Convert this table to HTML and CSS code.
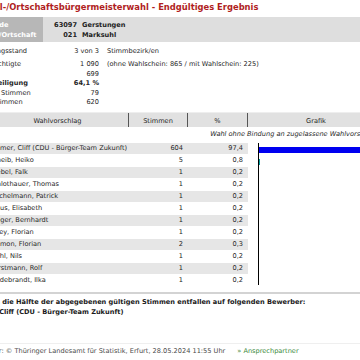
FILE: index.html
```html
<!DOCTYPE html>
<html lang="de">
<head>
<meta charset="utf-8">
<title>Ortsteil-/Ortschaftsbürgermeisterwahl - Endgültiges Ergebnis</title>
<link rel="stylesheet" href="styles.css">
</head>
<body>
<div class="page">
  <h1 class="title">Ortsteil-/Ortschaftsbürgermeisterwahl - Endgültiges Ergebnis</h1>

  <div class="band">
    <div class="band-labels">
      <div>Gemeinde</div>
      <div>Ortsteil/Ortschaft</div>
    </div>
    <div class="band-values">
      <span class="code">63097</span><span>Gerstungen</span>
      <span class="code">021</span><span>Marksuhl</span>
    </div>
  </div>

  <div class="info">
    <div class="info-row first"><span>Auszählungsstand</span><span class="val">3 von 3</span><span>Stimmbezirk/en</span></div>
    <div class="info-row"><span>Wahlberechtigte</span><span class="val">1 090</span><span>(ohne Wahlschein: 865 / mit Wahlschein: 225)</span></div>
    <div class="info-row"><span>Wähler</span><span class="val">699</span><span></span></div>
    <div class="info-row strong"><span>Wahlbeteiligung</span><span class="val">64,1 %</span><span></span></div>
    <div class="info-row"><span>Ungültige Stimmen</span><span class="val">79</span><span></span></div>
    <div class="info-row"><span>Gültige Stimmen</span><span class="val">620</span><span></span></div>
  </div>

  <div class="results">
    <div class="head">
      <div class="hc">Wahlvorschlag</div>
      <div class="hc">Stimmen</div>
      <div class="hc">%</div>
      <div class="hc last">Grafik</div>
    </div>
    <div class="note">Wahl ohne Bindung an zugelassene Wahlvorschläge</div>

    <div class="row alt"><div class="c name">Krämer, Cliff (CDU - Bürger-Team Zukunft)</div><div class="c num">604</div><div class="c pct">97,4</div><div class="graph"><div class="axis"><div class="bar blue" style="width:97.4%"></div></div></div></div>
    <div class="row"><div class="c name">Scheib, Heiko</div><div class="c num">5</div><div class="c pct">0,8</div><div class="graph"><div class="axis"><div class="bar teal" style="width:0.8%"></div></div></div></div>
    <div class="row alt"><div class="c name">Triebel, Falk</div><div class="c num">1</div><div class="c pct">0,2</div><div class="graph"><div class="axis"></div></div></div>
    <div class="row"><div class="c name">Schlothauer, Thomas</div><div class="c num">1</div><div class="c pct">0,2</div><div class="graph"><div class="axis"></div></div></div>
    <div class="row alt"><div class="c name">Reichelmann, Patrick</div><div class="c num">1</div><div class="c pct">0,2</div><div class="graph"><div class="axis"></div></div></div>
    <div class="row"><div class="c name">Kraus, Elisabeth</div><div class="c num">1</div><div class="c pct">0,2</div><div class="graph"><div class="axis"></div></div></div>
    <div class="row alt"><div class="c name">Krüger, Bernhardt</div><div class="c num">1</div><div class="c pct">0,2</div><div class="graph"><div class="axis"></div></div></div>
    <div class="row"><div class="c name">Lorey, Florian</div><div class="c num">1</div><div class="c pct">0,2</div><div class="graph"><div class="axis"></div></div></div>
    <div class="row alt"><div class="c name">Ammon, Florian</div><div class="c num">2</div><div class="c pct">0,3</div><div class="graph"><div class="axis"></div></div></div>
    <div class="row"><div class="c name">Stahl, Nils</div><div class="c num">1</div><div class="c pct">0,2</div><div class="graph"><div class="axis"></div></div></div>
    <div class="row alt"><div class="c name">Horstmann, Rolf</div><div class="c num">1</div><div class="c pct">0,2</div><div class="graph"><div class="axis"></div></div></div>
    <div class="row"><div class="c name">Heidebrandt, Ilka</div><div class="c num">1</div><div class="c pct">0,2</div><div class="graph"><div class="axis"></div></div></div>
  </div>

  <div class="divider"></div>

  <p class="winner">Mehr als die Hälfte der abgegebenen gültigen Stimmen entfallen auf folgenden Bewerber:<br>Krämer, Cliff (CDU - Bürger-Team Zukunft)</p>

  <div class="footline"></div>
  <div class="footer"><span>Herausgeber: © Thüringer Landesamt für Statistik, Erfurt, 28.05.2024 11:55 Uhr</span><a class="contact" href="#">» Ansprechpartner</a></div>
</div>
</body>
</html>
```

FILE: styles.css
```css
html, body {
  margin: 0;
  padding: 0;
  background: #ffffff;
}

body {
  width: 360px;
  height: 360px;
  overflow: hidden;
  font-family: "DejaVu Sans", Verdana, sans-serif;
  font-size: 6.6px;
  color: #262626;
}

.page {
  margin-left: -33px;
  width: 430px;
}

.title {
  margin: 0;
  padding-top: 2px;
  font-size: 8.4px;
  line-height: 10px;
  font-weight: bold;
  color: #b01e1e;
  white-space: nowrap;
}

.band {
  margin-top: 5px;
  display: grid;
  grid-template-columns: 76px 1fr;
  height: 25px;
  line-height: 10px;
  font-weight: bold;
}

.band-labels {
  background: #b7b7b7;
  color: #ffffff;
  padding: 2.5px 0 2.5px 4px;
  white-space: nowrap;
  overflow: hidden;
}

.band-values {
  background: #dedede;
  padding: 2.5px 0;
  display: grid;
  grid-template-columns: 34px 1fr;
  grid-auto-rows: 10px;
  column-gap: 5px;
  color: #222;
}

.code {
  text-align: right;
}

.info {
  margin-top: 5.25px;
}

.info-row {
  display: grid;
  grid-template-columns: 64px 60px 1fr;
  column-gap: 8px;
  line-height: 9.5px;
  white-space: nowrap;
}

.info-row.first {
  padding-bottom: 3.5px;
}

.info-row.strong {
  font-weight: bold;
}

.val {
  text-align: right;
}

.results {
  margin-top: 4.25px;
  margin-left: 20px;
  width: 397px;
}

.head {
  display: grid;
  grid-template-columns: 142px 59px 60px 1fr;
  height: 15px;
  background: #e1e1e1;
  border-top: 1px solid #eeeeee;
  box-sizing: border-box;
}

.hc {
  border-right: 1px solid #555555;
  text-align: center;
  padding-top: 3px;
  line-height: 10px;
  white-space: nowrap;
}

.hc.last {
  border-right: 0;
}

.note {
  height: 16px;
  box-sizing: border-box;
  padding: 2px 2px 0 0;
  line-height: 10px;
  text-align: right;
  font-style: italic;
  white-space: nowrap;
}

.row {
  display: grid;
  grid-template-columns: 142px 59px 60px 1fr;
  height: 12px;
}

.c {
  height: 12px;
  box-sizing: border-box;
  border-bottom: 1px solid #ffffff;
  line-height: 11px;
  white-space: nowrap;
  overflow: hidden;
}

.row.alt .c {
  background: #e6e6e6;
}

.name {
  padding-left: 2px;
}

.num,
.pct {
  text-align: right;
  padding-right: 5px;
}

.graph {
  padding-left: 10px;
}

.axis {
  height: 12px;
  border-left: 1px solid #000000;
  overflow: hidden;
}

.row:last-child .axis {
  height: 10px;
}

.bar {
  margin-top: 4px;
  height: 6px;
}

.bar.blue {
  background: #0000f0;
}

.bar.teal {
  background: #00999a;
}

.divider {
  margin-top: 5px;
  height: 2px;
  background: #d3d3d3;
}

.winner {
  margin: 2.5px 0 0;
  padding-left: 1px;
  line-height: 10px;
  font-weight: bold;
  color: #1a1a1a;
  white-space: nowrap;
}

.footline {
  margin-top: 26.5px;
  height: 1px;
  background: #efefef;
}

.footer {
  margin-top: 1.5px;
  margin-left: -8px;
  line-height: 10px;
  color: #4a4a4a;
  white-space: nowrap;
}

.contact {
  margin-left: 12px;
  color: #3b8a3b;
  text-decoration: none;
}
```
